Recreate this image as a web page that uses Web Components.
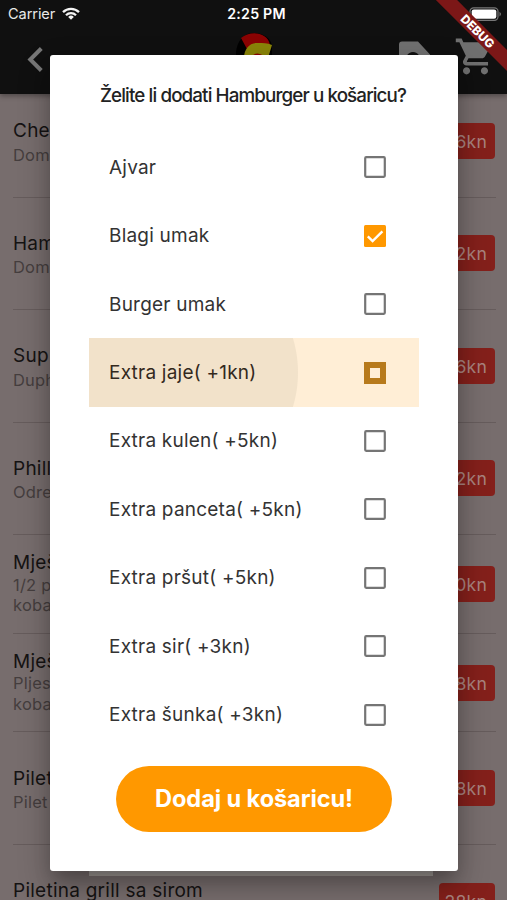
<!DOCTYPE html>
<html lang="hr">
<head>
<meta charset="UTF-8">
<title>Košarica</title>
<style>
    html, body { margin: 0; height: 100%; overflow: hidden; }
    body { font-family: Inter, "Liberation Sans", sans-serif; background: #776d6d; }
</style>
</head>
<body>
<order-screen></order-screen>
<script>
    // Dishes in the list behind the dialog
    const dishes = [
        { name: 'Che', lines: ['Dom'], price: '6kn', height: 112.5 },
        { name: 'Ham', lines: ['Dom'], price: '2kn', height: 112.5 },
        { name: 'Sup', lines: ['Duph'], price: '6kn', height: 112.5 },
        { name: 'Phill', lines: ['Odre'], price: '2kn', height: 112.5 },
        { name: 'Mješ', lines: ['1/2 p', 'koba'], price: '0kn', height: 98.7 },
        { name: 'Mješ', lines: ['Pljes', 'koba'], price: '8kn', height: 98.8 },
        { name: 'Pilet', lines: ['Pilet'], price: '8kn', height: 112.5 },
        { name: 'Piletina grill sa sirom', lines: ['&nbsp;'], price: '28kn', height: 112.5 },
    ];

    const extras = [
        { label: 'Ajvar', state: 'off' },
        { label: 'Blagi umak', state: 'on' },
        { label: 'Burger umak', state: 'off' },
        { label: 'Extra jaje( +1kn)', state: 'pressed' },
        { label: 'Extra kulen( +5kn)', state: 'off' },
        { label: 'Extra panceta( +5kn)', state: 'off' },
        { label: 'Extra pršut( +5kn)', state: 'off' },
        { label: 'Extra sir( +3kn)', state: 'off' },
        { label: 'Extra šunka( +3kn)', state: 'off' },
    ];

    class StatusBar extends HTMLElement {
        constructor() {
            super();
            this.attachShadow({ mode: 'open' }).innerHTML = `
                <style>
                    :host { display: grid; grid-template-columns: 1fr auto 1fr; align-items: center; height: 27px; padding: 0 5px 0 8px; box-sizing: border-box; color: #e9e9e9; }
                    .left { display: flex; align-items: center; gap: 7px; font-size: 14.6px; letter-spacing: -0.1px; }
                    .time { padding-left: 3px; font-size: 14.2px; font-weight: 600; letter-spacing: 0.2px; color: #fff; }
                    .battery { justify-self: end; }
                    svg { display: block; }
                </style>
                <div class="left">
                    <span>Carrier</span>
                    <svg width="18" height="13" viewBox="0 0 18 13" fill="none" stroke="#f4f4f4" stroke-width="2.3">
                        <path d="M1 5.1a11.4 11.4 0 0 1 16 0"/>
                        <path d="M4 8.2a7.1 7.1 0 0 1 10 0"/>
                        <path d="M9 12.8L6.2 9.9a4 4 0 0 1 5.6 0z" fill="#f4f4f4" stroke="none"/>
                    </svg>
                </div>
                <span class="time">2:25 PM</span>
                <svg class="battery" width="33" height="14" viewBox="0 0 33 14">
                    <rect x="1" y=".8" width="28" height="12.6" rx="3.6" fill="none" stroke="#777" stroke-width="1.2"/>
                    <rect x="2.7" y="2.4" width="24.6" height="9.4" rx="2.2" fill="#fff"/>
                    <path d="M30.5 4.8q3 2.3 0 4.6z" fill="#777"/>
                </svg>
            `;
        }
    }
    customElements.define('status-bar', StatusBar);

    class AppBar extends HTMLElement {
        constructor() {
            super();
            this.attachShadow({ mode: 'open' }).innerHTML = `
                <style>
                    :host { display: block; height: 94px; background: #101010; box-shadow: 0 2px 5px rgba(0,0,0,.35); position: relative; z-index: 1; overflow: hidden; }
                    .tools { display: grid; grid-template-columns: 1fr auto 1fr; height: 66px; padding: 1px 10px 0 27px; }
                    .back { margin-top: 18px; }
                    .logo { margin: 4px 14px 0 0; }
                    .actions { display: flex; justify-content: flex-end; gap: 23px; margin-top: 7.4px; }
                    svg { display: block; }
                </style>
                <status-bar></status-bar>
                <div class="tools">
                    <svg class="back" width="18" height="27" viewBox="0 0 18 27"><path d="M14.3 2.5L3.3 13.5l11 11" fill="none" stroke="#777" stroke-width="4"/></svg>
                    <svg class="logo" width="38" height="38" viewBox="0 0 38 38">
                        <path d="M0 26C-1 11 7 1 17 1c10 0 18 5 19 13v16H0z" fill="#000"/>
                        <path d="M5 6C14-2 32 0 34 13L24 13 15 13l-4 4z" fill="#8b0303"/>
                        <path d="M8 26c0-9 6-16 14-15 5 0 9 0 14 2l-4 13z" fill="#8a8409"/>
                        <path d="M16 24q5-5 12 0z" fill="#8b0303"/>
                    </svg>
                    <div class="actions">
                        <svg width="34" height="40" viewBox="0 0 34 40"><path fill-rule="evenodd" d="M5 6.5h16l12 13V37H2V9.5q0-3 3-3zM16 17a7 7 0 1 0 .01 0z" fill="#707070"/></svg>
                        <svg width="43" height="43" viewBox="0 0 24 24" fill="#707070"><path d="M7 18c-1.1 0-1.99.9-1.99 2S5.9 22 7 22s2-.9 2-2-.9-2-2-2zM1 2v2h2l3.6 7.59-1.35 2.45c-.16.28-.25.61-.25.96 0 1.1.9 2 2 2h12v-2H7.42c-.14 0-.25-.11-.25-.25l.03-.12.9-1.63h7.45c.75 0 1.41-.41 1.75-1.03l3.58-6.49c.08-.14.12-.31.12-.48 0-.55-.45-1-1-1H5.21l-.94-2H1zm16 16c-1.1 0-1.99.9-1.99 2s.89 2 1.99 2 2-.9 2-2-.9-2-2-2z"/></svg>
                    </div>
                </div>
            `;
        }
    }
    customElements.define('app-bar', AppBar);

    class DishRow extends HTMLElement {
        constructor() {
            super();
            this.attachShadow({ mode: 'open' });
        }

        connectedCallback() {
            // Rows with a two-line description are set tighter
            const tight = this.children.length > 1;
            this.shadowRoot.innerHTML = `
                <style>
                    :host { display: flex; align-items: center; justify-content: space-between; box-sizing: border-box; margin: 0 11px 0 13px; border-bottom: 1px solid #665c5c; flex: none; }
                    .info { padding-top: ${tight ? 0 : 1}px; }
                    .name { font-size: 19px; line-height: ${tight ? 22.5 : 27.5}px; letter-spacing: 0.25px; color: #151313; }
                    .text { font-size: 16.5px; letter-spacing: 0.2px; color: #453e3e; }
                    ::slotted(div) { line-height: 20.5px; }
                    .price { min-width: 56px; height: 36px; box-sizing: border-box; padding-right: 8px; border-radius: 4px; background: #84201b; color: #a8827e; font-size: 17.6px; line-height: 37px; letter-spacing: 0.2px; text-align: right; margin-right: 1px; }
                </style>
                <div class="info">
                    <div class="name">${this.dataset.name}</div>
                    <div class="text"><slot></slot></div>
                </div>
                <div class="price">${this.dataset.price}</div>
            `;
        }
    }
    customElements.define('dish-row', DishRow);

    class CheckBox extends HTMLElement {
        static get observedAttributes() { return ['state']; }

        constructor() {
            super();
            this.attachShadow({ mode: 'open' });
        }

        attributeChangedCallback() {
            const marks = {
                off: '<rect x="1.2" y="1.2" width="19.6" height="19.6" rx="1" fill="none" stroke="#757575" stroke-width="2.2"/>',
                on: '<rect width="22" height="22" rx="1.5" fill="#ff9800"/><path d="M3.8 11.3l4.8 4.8L18.4 6.3" fill="none" stroke="#fff" stroke-width="2.4"/>',
                pressed: '<rect x="3" y="3" width="16" height="16" fill="none" stroke="#b77a1c" stroke-width="6"/>',
            };
            this.shadowRoot.innerHTML = `
                <style>
                    :host { display: block; width: 22px; height: 22px; }
                    svg { display: block; }
                </style>
                <svg width="22" height="22" viewBox="0 0 22 22">${marks[this.getAttribute('state')]}</svg>
            `;
        }
    }
    customElements.define('check-box', CheckBox);

    class ExtraOption extends HTMLElement {
        constructor() {
            super();
            this.attachShadow({ mode: 'open' });
        }

        connectedCallback() {
            const { state } = this.dataset;
            this.shadowRoot.innerHTML = `
                <style>
                    :host { display: flex; align-items: center; justify-content: space-between; height: 68.45px; box-sizing: border-box; padding: 0 33px 0 20px; font-size: 19px; letter-spacing: 0.22px; color: #333; }
                    /* Ink ripple still growing from the touch point */
                    :host([data-state="pressed"]) { background: radial-gradient(circle at 91px 50%, #f2e2ca 117.5px, #ffeed6 118.5px); color: #33291d; }
                </style>
                <slot></slot>
                <check-box state="${state}"></check-box>
            `;
        }
    }
    customElements.define('extra-option', ExtraOption);

    class CartDialog extends HTMLElement {
        constructor() {
            super();
            this.attachShadow({ mode: 'open' }).innerHTML = `
                <style>
                    :host { display: flex; flex-direction: column; width: 408px; height: 816px; box-sizing: border-box; padding: 0 39px; border-radius: 3px; background: #fff; box-shadow: 0 11px 18px -4px rgba(0,0,0,.22), 0 14px 30px 3px rgba(0,0,0,.22); }
                    h1 { margin: 28px 2px 0 0; height: 26px; font-size: 18.8px; font-weight: 500; line-height: 26px; letter-spacing: -0.88px; text-align: center; white-space: nowrap; color: #222; }
                    .options { margin-top: 24.5px; }
                    button { align-self: center; width: 276px; height: 66px; margin-top: 17px; padding: 0; border: 0; border-radius: 33px; background: #ff9800; color: #fff; font: 700 23.6px Inter, sans-serif; letter-spacing: -0.1px; }
                </style>
                <h1><slot name="title"></slot></h1>
                <div class="options"><slot></slot></div>
                <button><slot name="action"></slot></button>
            `;
        }
    }
    customElements.define('cart-dialog', CartDialog);

    class DebugBanner extends HTMLElement {
        constructor() {
            super();
            this.attachShadow({ mode: 'open' }).innerHTML = `
                <style>
                    :host { position: absolute; top: 22.5px; right: -38px; width: 136px; height: 15px; transform: rotate(45deg); background: #7c1717; color: #fff; font-size: 12px; font-weight: 800; line-height: 15px; text-align: center; }
                    span { padding-left: 2px; }
                </style>
                <span>DEBUG</span>
            `;
        }
    }
    customElements.define('debug-banner', DebugBanner);

    class OrderScreen extends HTMLElement {
        constructor() {
            super();
            this.attachShadow({ mode: 'open' }).innerHTML = `
                <style>
                    :host { display: block; position: relative; width: 507px; height: 900px; overflow: hidden; background: #776d6d; }
                    .list { display: flex; flex-direction: column; height: 806px; margin-top: -9px; }
                    /* Lower edge of the sheet that sits under the dialog */
                    .sheet { position: absolute; left: 89px; top: 860px; width: 344px; height: 16px; background: #9f9995; }
                    cart-dialog { position: absolute; left: 50px; top: 54.5px; z-index: 2; }
                    debug-banner { z-index: 3; }
                </style>
                <app-bar></app-bar>
                <div class="list">
                    ${dishes.map(d => `
                        <dish-row data-name="${d.name}" data-price="${d.price}" style="height: ${d.height}px">
                            ${d.lines.map(line => `<div>${line}</div>`).join('')}
                        </dish-row>`).join('')}
                </div>
                <div class="sheet"></div>
                <cart-dialog>
                    <span slot="title">Želite li dodati Hamburger u košaricu?</span>
                    ${extras.map(e => `<extra-option data-state="${e.state}">${e.label}</extra-option>`).join('')}
                    <span slot="action">Dodaj u košaricu!</span>
                </cart-dialog>
                <debug-banner></debug-banner>
            `;
        }
    }
    customElements.define('order-screen', OrderScreen);
</script>
</body>
</html>
